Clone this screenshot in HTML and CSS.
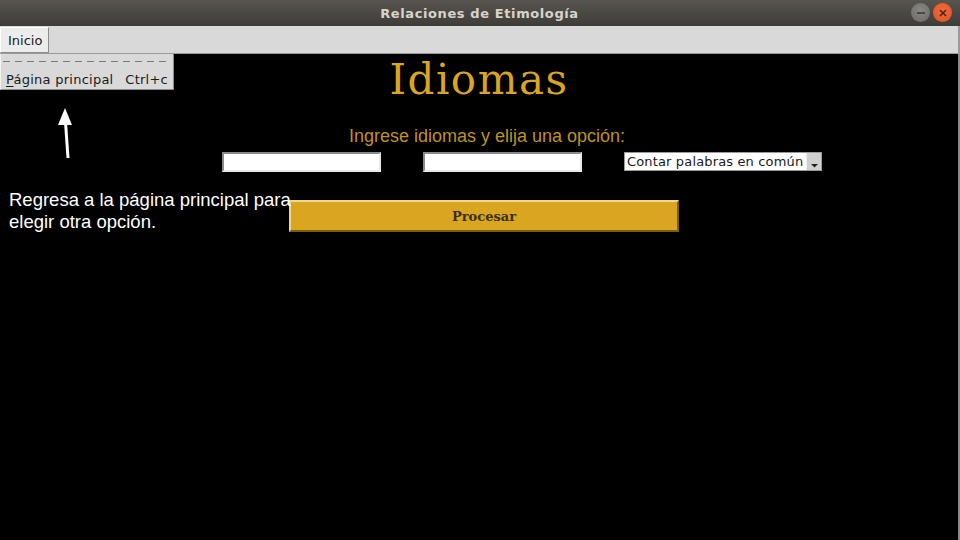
FILE: index.html
```html
<!DOCTYPE html>
<html lang="es">
<head>
<meta charset="utf-8">
<title>Relaciones de Etimología</title>
<link rel="stylesheet" href="styles.css">
</head>
<body>
<div class="window">
  <header class="titlebar">
    <span class="title">Relaciones de Etimología</span>
    <div class="controls">
      <span class="wbtn wbtn-min"><svg width="18" height="18" viewBox="0 0 18 18"><line x1="5" y1="9" x2="13" y2="9" stroke="#3a3a36" stroke-width="1.6"/></svg></span>
      <span class="wbtn wbtn-close"><svg width="18" height="18" viewBox="0 0 18 18"><path d="M6 6 L12 12 M12 6 L6 12" stroke="#3a2a20" stroke-width="1.6"/></svg></span>
    </div>
  </header>
  <nav class="menubar">
    <span class="menu-item active">Inicio</span>
  </nav>
  <main class="content">
    <div class="dropdown">
      <div class="tearoff"></div>
      <div class="dd-row"><span><u>P</u>ágina principal</span><span class="accel">Ctrl+c</span></div>
    </div>
    <svg class="arrow" width="30" height="52" viewBox="0 0 30 52">
      <line x1="15" y1="50" x2="12.5" y2="14" stroke="#fff" stroke-width="3"/>
      <polygon points="12,0 5,17 19,17" fill="#fff"/>
    </svg>
    <p class="note">Regresa a la página principal para<br>elegir otra opción.</p>

    <h1 class="heading">Idiomas</h1>
    <p class="prompt">Ingrese idiomas y elija una opción:</p>
    <div class="inputs">
      <input class="entry" type="text">
      <input class="entry" type="text">
      <div class="optmenu"><span>Contar palabras en común</span><span class="opt-arrow"><svg width="9" height="9" viewBox="0 0 9 9"><polygon points="1,4 8,4 4.5,7.5" fill="#222"/></svg></span></div>
    </div>
    <div class="btn-row"><button class="process">Procesar</button></div>
  </main>
</div>
</body>
</html>
```
FILE: styles.css
```css
* { box-sizing: border-box; }
html, body { margin: 0; padding: 0; width: 960px; height: 540px; overflow: hidden; background: #000; }
.window {
  width: 960px; height: 540px;
  display: flex; flex-direction: column;
  font-family: "DejaVu Sans", sans-serif;
}
.titlebar {
  height: 26px; flex: none;
  background: linear-gradient(#58554f, #3e3c38);
  display: flex; align-items: center; justify-content: center;
  position: relative;
}
.title {
  font-family: "DejaVu Sans", sans-serif;
  font-weight: 700; font-size: 13px; color: #d8d4cc;
  letter-spacing: 0.6px;
  margin-left: -1px;
}
.controls {
  position: absolute; right: 8px; top: 3px;
  display: flex; gap: 3px;
}
.wbtn {
  width: 19px; height: 19px; border-radius: 50%;
  display: flex; align-items: center; justify-content: center;
}
.wbtn-min { background: radial-gradient(circle at 50% 40%, #8a8884, #6b6965); }
.wbtn-close { background: radial-gradient(circle at 50% 40%, #f26b3a, #e0511f); }
.menubar {
  height: 28px; flex: none;
  background: #d9d9d9;
  border-bottom: 1px solid #9a9a9a;
  border-right: 2px solid #9a9a9a;
  display: flex; align-items: stretch;
  padding-top: 1px;
}
.menu-item {
  font-size: 13px; color: #1a1a1a;
  padding: 5px 6px 0 8px;
  height: 26px;
}
.menu-item.active {
  background: #ececec;
  border-right: 1px solid #8c8c8c;
  border-bottom: 1px solid #8c8c8c;
  border-top: 1px solid #fff;
  border-left: 1px solid #fff;
  padding-left: 7px;
  width: 49px;
}
.content {
  flex: 1; position: relative;
  background: #000;
  border-right: 2px solid #8a8a8a;
  display: flex; flex-direction: column; align-items: stretch;
}
.dropdown {
  position: absolute; left: 0; top: 0;
  width: 174px; height: 36px;
  background: #d9d9d9;
  border-right: 1px solid #8c8c8c;
  border-bottom: 1px solid #8c8c8c;
  border-left: 1px solid #f4f4f4;
  z-index: 2;
}
.tearoff {
  margin: 7px 4px 0 2px;
  height: 1px;
  background: repeating-linear-gradient(90deg, #7a7a7a 0 7px, transparent 7px 12px);
}
.dd-row {
  display: flex; justify-content: space-between;
  font-size: 13px; color: #1a1a1a;
  padding: 10px 5px 0 5px;
  line-height: 15px;
  letter-spacing: 0.25px;
}
.dd-row u { text-underline-offset: 2px; }
.arrow {
  position: absolute; left: 53px; top: 54px;
  overflow: visible;
}
.note {
  position: absolute; left: 9px; top: 135px; margin: 0;
  font-family: "Liberation Sans", Arial, sans-serif;
  font-size: 18.5px; line-height: 21.5px; color: #fff;
  z-index: 2;
}
.heading {
  margin: 2px 0 0 0;
  text-align: center;
  font-family: "DejaVu Serif", serif;
  font-weight: 400; font-size: 42px; line-height: 48px;
  letter-spacing: 1.5px;
  color: #daa520;
}
.prompt {
  margin: 22px 0 0 0;
  padding-left: 16px;
  text-align: center;
  font-family: "Liberation Sans", Arial, sans-serif;
  font-size: 18px; line-height: 20px;
  color: #bf921e;
}
.inputs {
  display: flex; align-items: flex-start;
  padding-left: 222px; margin-top: 6px;
  gap: 42px;
}
.entry {
  width: 159px; height: 20px; margin: 0; padding: 0;
  background: #fff;
  border: 2px solid #a8a8a8;
  border-color: #8a8a8a #e8e8e8 #e8e8e8 #8a8a8a;
  outline: none;
}
.optmenu {
  width: 198px; height: 19px;
  background: #fff;
  border: 1px solid #9a9a9a;
  display: flex; align-items: center; justify-content: space-between;
  font-size: 13px; color: #1a1a1a;
  padding-left: 2px;
  letter-spacing: 0.15px;
}
.opt-arrow {
  width: 15px; height: 17px;
  background: #d0d0d0;
  border-left: 1px solid #eee;
  display: flex; align-items: flex-end; justify-content: center;
  padding-bottom: 1px;
}
.btn-row {
  padding-left: 289px; margin-top: 28px;
}
.process {
  width: 390px; height: 32px; margin: 0;
  background: #daa520;
  border: 2px solid;
  border-color: #f0d88a #7a5e10 #7a5e10 #f0d88a;
  font-family: "DejaVu Serif", serif;
  font-weight: 700;
  font-size: 13px; color: #3b2d06;
  padding: 0;
}
```
